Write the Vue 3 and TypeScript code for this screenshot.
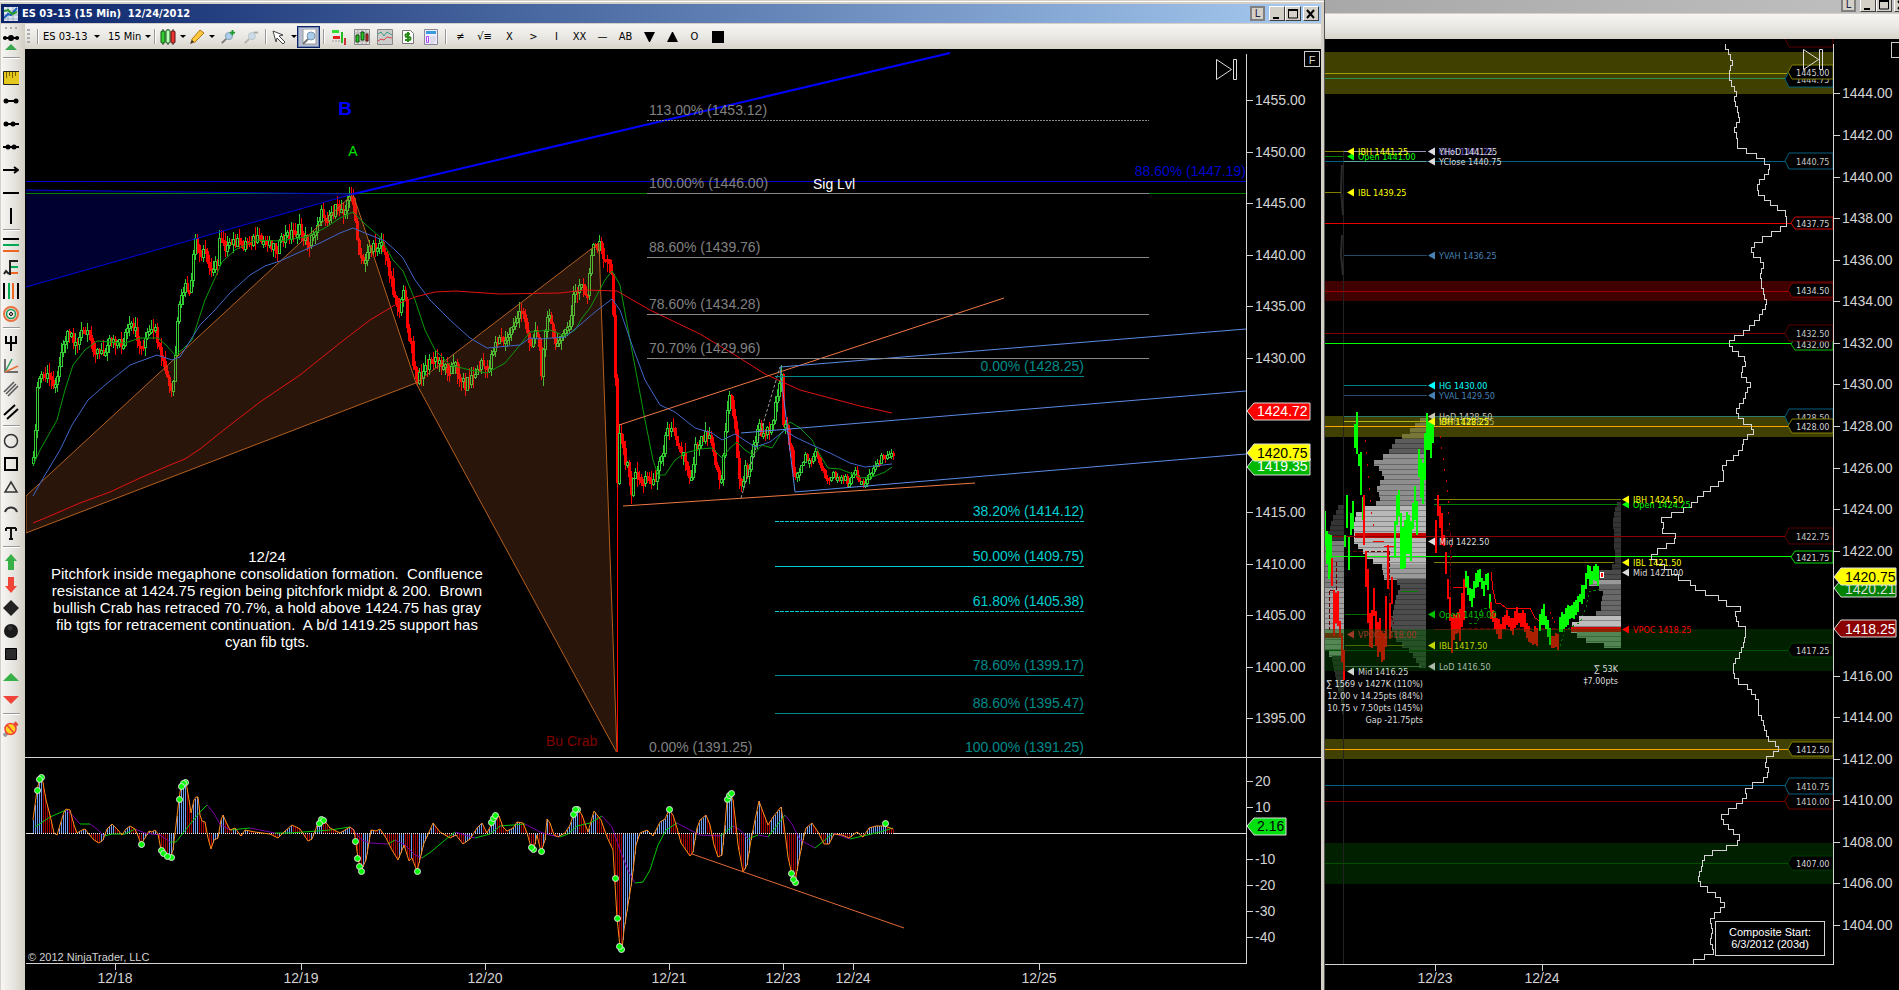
<script setup lang="ts">
type Pt = [number, number]

/* ---------- helpers ---------- */
const parse = (s: string): Pt[] =>
  s.trim().split(/\s+/).map((p) => p.split(',').map(Number) as Pt)

const at = (k: Pt[], x: number): number => {
  for (let i = 1; i < k.length; i++) {
    if (x <= k[i][0]) {
      const [x0, y0] = k[i - 1]
      const [x1, y1] = k[i]
      return x1 === x0 ? y1 : y0 + ((y1 - y0) * (x - x0)) / (x1 - x0)
    }
  }
  return k[k.length - 1][1]
}
const noise = (i: number): number => {
  const v = Math.sin(i * 12.9898) * 43758.5453
  return v - Math.floor(v)
}

/* ---------- price series, 15 minute bars ---------- */
const price = parse(`33,463 34,445 36,405 38,380 40,375 44,376 48,378 52,380 57,380 60,350 63,345 66,332 70,333 73,340 77,342 82,332 86,335 90,340 95,350 100,355
103,352 107,340 112,337 118,342 122,345 127,328 131,328 136,333 140,350 144,340 148,334 156,332 160,360 165,370 168,385 172,396 174,370 177,325 179,310 182,293
186,285 190,300 192,270 194,233 197,250 201,262 204,245 208,270 212,265 217,265 219,235 223,238 226,250 230,246 234,240 240,246 245,243 250,239 256,240 262,242
268,240 276,249 282,240 288,234 294,231 300,230 304,238 308,242 312,238 316,225 320,214 325,216 331,212 338,208 344,210 346,200 350,198 353,200 355,220 357,245
360,260 364,262 368,245 372,250 376,245 380,238 384,255 388,265 392,285 396,303 400,310 404,290 405,295 408,340 411,345 413,365 417,382 421,372 427,365 433,360
440,362 447,368 455,365 460,378 465,384 470,378 477,372 481,360 486,374 490,360 494,342 500,338 505,343 510,330 515,320 521,313 526,320 530,350 534,330 537,335
541,370 544,330 548,315 552,330 555,350 560,330 565,335 570,322 573,295 577,292 582,282 586,300 590,265 593,245 596,255 599,244 603,255 608,263 612,280 615,378
617,478 619,430 623,450 627,468 631,490 636,470 641,482 648,478 655,480 660,458 665,440 670,422 674,425 678,448 684,455 690,480 695,445 700,440 707,430 712,440
716,470 721,480 725,430 730,390 735,430 739,480 742,492 745,460 748,480 752,450 758,425 763,437 768,430 773,415 778,385 781,376 783,420 787,430 791,450 795,483
800,472 804,455 810,460 815,453 820,468 826,478 832,475 840,477 848,482 855,472 862,485 868,475 875,467 880,460 885,455 889,450 893,451`)

const bars = (() => {
  let up = ''
  let down = ''
  let downWick = ''
  let prev = price[0][1]
  for (let i = 0, x = 33; x <= 893; x += 2, i++) {
    const calm = x > 800
    const y = Math.round(at(price, x) + (noise(i) - 0.5) * (calm ? 8 : 12))
    const t = Math.min(prev, y)
    const b = Math.max(prev, y, t + 3)
    const reach = calm ? 5 : 10
    const wt = Math.round(t - noise(i + 500) * reach)
    const wb = Math.round(b + noise(i + 900) * reach)
    if (y < prev) up += `M${x + 0.5} ${wt}V${t}M${x + 0.5} ${b}V${wb}M${x - 0.5} ${t}.5h2V${b}.5h-2Z`
    else {
      down += `M${x - 1} ${t}h3V${b}h-3Z`
      downWick += `M${x + 0.5} ${wt}V${wb}`
    }
    prev = y
  }
  return { up, down, downWick }
})()

const averages = [
  { c: '#0a9a0a', p: '33,466 40,450 57,420 65,390 73,365 85,350 97,341 125,343 140,338 158,338 166,345 175,355 182,350 192,340 205,300 215,278 222,262 235,250 255,240 280,241 306,237 325,228 340,218 353,212 365,224 380,237 393,260 403,271 415,300 425,330 435,350 450,365 470,370 487,373 505,363 520,345 530,332 550,330 565,336 575,330 582,318 590,308 605,280 612,271 620,285 630,340 645,420 653,460 658,475 665,475 675,460 685,453 700,449 712,448 722,458 730,448 737,442 745,450 753,455 762,445 772,448 780,435 790,422 800,428 812,440 820,455 828,468 840,469 850,473 862,478 875,476 885,472 892,467' },
  { c: '#3f66c8', p: '33,496 42,480 60,450 72,425 88,400 105,385 130,365 157,355 172,360 180,357 200,325 215,310 230,293 250,275 265,266 280,261 300,252 320,243 340,233 353,228 365,233 385,241 395,250 403,258 415,280 430,300 450,320 470,338 487,348 520,345 530,338 540,339 565,337 580,325 595,312 612,299 620,310 632,345 645,380 660,405 675,412 695,428 712,433 722,440 735,434 755,447 770,442 785,430 795,437 812,445 830,453 850,463 865,467 892,464' },
  { c: '#e01212', p: '33,523 50,516 80,503 110,492 140,478 170,465 185,459 200,449 225,429 260,402 300,375 340,343 370,320 395,305 415,297 435,292 455,291 500,294 560,293 585,290 617,291 650,310 700,334 735,355 765,374 800,390 830,398 860,406 892,413' },
]

const grayFibs = [
  { t: '113.00% (1453.12)', y: 120, dash: '2 1' },
  { t: '100.00% (1446.00)', y: 193 },
  { t: '88.60% (1439.76)', y: 257 },
  { t: '78.60% (1434.28)', y: 314 },
  { t: '70.70% (1429.96)', y: 358 },
]
const cyanFibs = [
  { t: '0.00% (1428.25)', y: 376, c: '#008b8b' },
  { t: '38.20% (1414.12)', y: 521, c: '#00ced1', dash: '4 1' },
  { t: '50.00% (1409.75)', y: 566, c: '#00ced1' },
  { t: '61.80% (1405.38)', y: 611, c: '#00ced1', dash: '4 1' },
  { t: '78.60% (1399.17)', y: 675, c: '#008b8b' },
  { t: '88.60% (1395.47)', y: 713, c: '#008b8b' },
]
const note = [
  '12/24',
  'Pitchfork inside megaphone consolidation formation.  Confluence',
  'resistance at 1424.75 region being pitchfork midpt & 200.  Brown',
  'bullish Crab has retraced 70.7%, a hold above 1424.75 has gray',
  'fib tgts for retracement continuation.  A b/d 1419.25 support has',
  'cyan fib tgts.',
]
const priceTicks = Array.from({ length: 13 }, (_, i) => 1455 - i * 5)
  .filter((p) => p !== 1425 && p !== 1420)
  .map((p) => ({ t: p.toFixed(2), y: Math.round(100 + (1455 - p) * 10.3) }))
const oscTicks = [20, 10, -10, -20, -30, -40].map((v) => ({ t: String(v), y: Math.round(833 - v * 2.6) }))
const dates = [
  ['12/18', 115], ['12/19', 301], ['12/20', 485], ['12/21', 669], ['12/23', 783], ['12/24', 853], ['12/25', 1039],
] as [string, number][]
const sideDates = [['12/23', 1435], ['12/24', 1542]] as [string, number][]

/* ---------- oscillator ---------- */
const osc = parse(`33,820 37,790 40,778 42,777 46,800 50,815 54,833 57,835 60,825 64,812 66,809 70,810 74,825 77,833 82,830 85,829 88,833 94,840 99,843 103,840 107,829 112,824
118,830 122,835 126,829 130,826 135,829 138,836 141,844 145,838 149,831 152,832 155,830 158,834 161,850 164,854 167,856 171,856 173,850 176,825 179,799 181,786 184,782 186,782
189,800 191,813 194,800 196,797 198,797 200,815 202,821 205,822 208,838 211,849 214,840 218,838 221,820 223,815 226,822 230,830 235,828 241,836 245,830 255,832 270,834 278,838
285,831 292,825 300,829 308,841 312,839 318,823 321,819 324,820 330,828 340,833 350,827 354,830 358,858 361,871 366,860 371,830 376,831 380,829 386,838 392,850 398,860 404,845
409,861 412,858 417,871 421,855 424,843 430,830 433,823 440,832 450,838 456,835 463,844 470,839 477,828 482,823 487,833 491,825 495,815 499,816 503,827 507,831 513,828 517,822
523,823 527,833 531,847 534,848 537,835 541,852 545,840 547,819 550,823 554,835 558,837 565,833 570,825 575,810 578,809 582,815 588,832 594,811 601,820 607,837 613,850 617,918
620,947 622,949 624,930 628,905 632,880 636,845 640,833 647,830 653,836 660,822 665,819 669,810 673,815 677,828 681,843 690,856 693,852 697,828 700,820 706,815 710,825 714,845
718,857 722,855 725,825 727,800 730,794 733,800 736,825 738,845 743,872 747,865 751,840 755,820 759,801 763,812 768,825 773,817 781,807 784,825 788,857 792,875 795,882 798,865
803,840 806,828 812,823 818,832 824,844 829,844 834,834 842,835 849,838 857,832 863,837 869,828 876,826 885,826 893,829`)
const oscLine = 'M' + osc.map((p) => p.join(' ')).join('L')
const oscBars = (() => {
  let rise = ''
  let fall = ''
  for (let x = 33; x <= 893; x += 2) {
    const y = Math.round(at(osc, x))
    const seg = `M${x}.5 833V${y}`
    if (y <= at(osc, x - 2)) rise += seg
    else fall += seg
  }
  return { rise, fall }
})()
const signal = parse(`35,827 50,817 66,810 72,815 80,824 90,824 97,829 104,836 112,834 125,834 135,829 145,833 160,835 170,842 176,842 187,828 200,812 207,805 213,812 220,824 230,830
250,828 275,833 290,833 330,830 350,827 362,840 370,843 388,844 395,840 405,845 415,855 422,858 432,851 445,840 455,832 462,834 475,838 490,834 500,826 525,824 540,832 550,835 560,837
568,834 577,826 590,823 602,816 612,827 620,850 628,870 635,883 643,882 650,870 658,845 666,830 677,823 690,830 700,835 720,836 733,826 740,830 748,839 758,835 768,837 775,828 785,815
792,824 800,840 815,848 825,840 833,833 850,839 880,832 893,828`)
const signalSegs = signal.slice(1).map((p, i) => ({
  d: `M${signal[i].join(' ')}L${p.join(' ')}`,
  c: p[1] <= signal[i][1] ? '#00c800' : '#7a00a8',
}))
const dots = parse(`37,790 41,777 39,779 141,844 161,850 163,853 171,857 167,856 179,799 185,782 183,783 181,786 321,819 323,820 319,823 355,841 357,858 359,866 361,871 417,871 491,822
493,818 495,815 533,849 531,847 541,851 573,814 577,809 575,809 615,878 617,918 621,949 619,946 669,809 727,799 729,795 731,793 791,873 795,882 793,879 885,823`)

/* ---------- right chart ---------- */
const rTicks = Array.from({ length: 21 }, (_, i) => 1444 - i * 2)
  .filter((p) => p !== 1420 && p !== 1418)
  .map((p) => ({ t: p.toFixed(2), y: Math.round(135 + (1442 - p) * 20.79) }))

const bands = [
  { y: 52, h: 42, c: '#404000' },
  { y: 281, h: 20, c: '#400000' },
  { y: 416, h: 21, c: '#404000' },
  { y: 739, h: 20, c: '#404000' },
  { y: 843, h: 41, c: '#002000' },
]
const lines = [
  { y: 73, a: 1325, b: 1788, c: '#a0a000' },
  { y: 78, a: 1325, b: 1786, c: '#2e8b57' },
  { y: 151, a: 1325, b: 1344, c: '#808000' },
  { y: 151, a: 1344, b: 1426, c: '#9a93b8' },
  { y: 156, a: 1325, b: 1343, c: '#008000' },
  { y: 161, a: 1325, b: 1785, c: '#006080' },
  { y: 161, a: 1344, b: 1426, c: '#5fa0a8' },
  { y: 192, a: 1325, b: 1341, c: '#808000' },
  { y: 223, a: 1325, b: 1791, c: '#e80000' },
  { y: 255, a: 1344, b: 1427, c: '#274a6b' },
  { y: 291, a: 1325, b: 1788, c: '#a00000' },
  { y: 333, a: 1325, b: 1786, c: '#800000' },
  { y: 343, a: 1325, b: 1791, c: '#00ff00' },
  { y: 385, a: 1344, b: 1427, c: '#008080' },
  { y: 395, a: 1344, b: 1427, c: '#274a6b' },
  { y: 416, a: 1344, b: 1785, c: '#2e7b6b' },
  { y: 421, a: 1344, b: 1427, c: '#b0b020' },
  { y: 426, a: 1325, b: 1788, c: '#ffa500' },
  { y: 536, a: 1325, b: 1785, c: '#8b0000' },
  { y: 556, a: 1325, b: 1791, c: '#00ff00' },
  { y: 499, a: 1434, b: 1621, c: '#808000' },
  { y: 504, a: 1434, b: 1618, c: '#008000' },
  { y: 562, a: 1434, b: 1614, c: '#808000' },
  { y: 614, a: 1345, b: 1371, c: '#007000' },
  { y: 629, a: 1434, b: 1571, c: '#700000' },
  { y: 645, a: 1345, b: 1404, c: '#707000' },
  { y: 666, a: 1345, b: 1421, c: '#5c735c' },
  { y: 650, a: 1325, b: 1788, c: '#004d00' },
  { y: 749, a: 1325, b: 1789, c: '#ffa500' },
  { y: 785, a: 1325, b: 1785, c: '#006080' },
  { y: 801, a: 1325, b: 1785, c: '#800000' },
  { y: 863, a: 1325, b: 1789, c: '#005000' },
]
type Kind = 'l' | 'm' | 's'
const dims: Record<Kind, { x: number; h: number }> = { l: { x: 1785, h: 8 }, m: { x: 1788, h: 7 }, s: { x: 1791, h: 6 } }
const levels = ([
  ['1444.75', 79, 'l', '#006080'], ['1445.00', 72, 'm', '#808000'],
  ['1440.75', 161, 'l', '#006080'], ['1437.75', 223, 's', '#d00000'],
  ['1434.50', 290, 'm', '#800000'], ['1432.00', 344, 's', '#00c000'],
  ['1432.50', 333, 'l', '#580000'], ['1428.50', 417, 'l', '#006080'],
  ['1428.00', 426, 'm', '#808000'], ['1422.75', 536, 'l', '#580000'],
  ['1421.75', 557, 's', '#00e000'], ['1417.25', 650, 'm', '#004000'],
  ['1412.50', 749, 'm', '#808000'], ['1410.00', 801, 'l', '#700000'],
  ['1410.75', 786, 'l', '#006080'], ['1407.00', 863, 'm', '#003800'],
] as [string, number, Kind, string][]).map(([t, y, k, c]) => {
  const { x, h } = dims[k]
  return { t, y, k, c, d: `M${x} ${y}L${x + 4} ${y - h}H1833V${y + h}H${x + 4}Z` }
})
const marks = [
  [1347, 156, 'Open 1441.00', '#00ff00'], [1347, 151, 'IBH 1441.25', '#ffff00'], [1347, 192, 'IBL 1439.25', '#ffff00'],
  [1428, 151, 'OHH 1441.25', '#6a5acd'], [1428, 151, 'YHoD 1441.25', '#dcdcdc'], [1428, 161, 'YClose 1440.75', '#dcdcdc'],
  [1428, 255, 'YVAH 1436.25', '#4682b4'], [1428, 385, 'HG 1430.00', '#00ffff'], [1428, 395, 'YVAL 1429.50', '#4682b4'],
  [1428, 416, 'HoD 1428.50', '#c8c8b8'], [1428, 421, 'YMid 1428.25', '#b0b060'], [1428, 421, 'IBH 1428.25', '#ffff00'],
  [1428, 541, 'Mid 1422.50', '#dcdcdc'], [1428, 614, 'Open 1419.00', '#00c000'], [1428, 645, 'IBL 1417.50', '#c0d800'],
  [1428, 666, 'LoD 1416.50', '#a8b8a8'], [1347, 634, 'VPOC 1418.00', '#a03a28'], [1347, 671, 'Mid 1416.25', '#d0d8d0'],
  [1622, 504, 'Open 1424.25', '#00ff00'], [1622, 499, 'IBH 1424.50', '#ffff00'], [1622, 562, 'IBL 1421.50', '#ffff00'],
  [1622, 572, 'Mid 1421.00', '#dcdcdc'], [1622, 629, 'VPOC 1418.25', '#ff0000'],
].map(([x, y, t, c]) => ({ x: x as number, y: y as number, t: t as string, c: c as string }))

/* vertical profile: key points are [y, left edge] */
const rows = (edge: Pt[], right: number, shade: (y: number) => string) => {
  const out: { x: number; y: number; w: number; c: string }[] = []
  for (let i = 0, y = edge[0][0]; y < edge[edge.length - 1][0]; i++, y = Math.round(edge[0][0] + i * 5.2)) {
    const x = Math.round(at(edge, y + 2))
    out.push({ x, y, w: right - x, c: shade(y) })
  }
  return out
}
const profiles = [
  ...rows(parse('418,1422 428,1412 432,1407 440,1396 450,1390 455,1384 460,1377 463,1373 466,1378 472,1382 480,1385 484,1375 490,1378 498,1380 505,1375 508,1365 515,1355 530,1354 538,1353 545,1358 552,1365 558,1368 562,1377 565,1382 578,1384 582,1401 600,1395 612,1393 620,1390 628,1392 640,1397 650,1410 660,1417 668,1421'), 1426,
    (y) => (y < 437 ? '#77773a' : y < 450 ? '#5c5c5c' : y < 505 ? '#8e8e8e' : y < 560 ? '#b8b8b8' : y < 578 ? '#9a9a9a' : y < 628 ? '#4d4d4d' : '#3a4a3a')),
  ...rows(parse('505,1339 520,1332 530,1330 535,1325 650,1325 655,1331 665,1334 680,1336 700,1341 710,1342'), 1344,
    (y) => (y < 538 ? '#333' : y < 585 ? '#7d7d7d' : y < 628 ? '#a2a2a2' : y < 652 ? '#7f9a7f' : '#273227')),
  ...rows(parse('502,1618 510,1615 518,1613 540,1614 560,1615 567,1612 570,1600 577,1598 580,1588 584,1590 588,1602 595,1604 600,1601 612,1601 616,1582 622,1572 631,1571 635,1579 640,1588 645,1608 648,1608'), 1621,
    (y) => (y < 568 ? '#333' : y < 578 ? '#4a4a4a' : y < 584 ? '#999' : y < 614 ? '#686868' : y < 630 ? '#bdbdbd' : '#7d967d')),
]
const vpocs = [
  { x: 1355, y: 533, w: 71, h: 5, c: '#c80000' },
  { x: 1325, y: 633, w: 18, h: 5, c: '#8e2410' },
  { x: 1571, y: 627, w: 50, h: 5, c: '#cc0800' },
]
const runs = [
  ['#0f0', '1325,540 1329,550 1332,560'],
  ['#f00', '1332,570 1333,620 1337,600 1341,640 1344,660'],
  ['#0f0', '1345,640 1345,540 1347,510 1349,560 1351,520 1352,550 1354,470 1355,430 1357,440 1360,470 1363,510'],
  ['#f00', '1364,520 1366,580 1369,600 1371,660 1374,600 1376,620 1378,650 1381,645 1383,655 1386,620 1388,575 1390,610 1393,590'],
  ['#0f0', '1395,545 1397,520 1399,500 1401,540 1404,555 1408,530 1412,540 1414,500 1417,520 1418,450 1420,480 1422,500 1425,460 1426,425 1430,440 1434,425'],
  ['#f00', '1436,540 1437,510 1439,505 1443,530 1446,560 1449,600 1452,635 1455,620 1460,625 1464,600'],
  ['#0f0', '1466,580 1469,590 1472,600 1475,580 1480,575 1484,590 1487,575 1490,600'],
  ['#f00', '1491,612 1495,622 1500,630 1507,618 1512,625 1518,617 1524,621 1527,630 1532,637 1538,635'],
  ['#0f0', '1540,622 1544,615 1548,630 1550,635'],
  ['#f00', '1552,643 1558,640'],
  ['#0f0', '1560,625 1566,617 1572,612 1578,602 1584,590 1588,572 1592,580 1596,572 1599,576'],
].map(([c, s], n) => {
  const k = parse(s)
  const wild = k[0][0] < 1436 ? 26 : k[0][0] < 1466 ? 16 : 7
  const base = wild > 10 ? 5 : 4
  let d = ''
  for (let x = k[0][0], i = 0; x <= k[k.length - 1][0]; x += 2, i++) {
    const y = Math.round(at(k, x))
    const r = (salt: number) => Math.round(noise(i * 7 + n * 31 + salt) * wild)
    d += `M${x} ${y - base - r(1)}V${y + base + r(2)}`
  }
  return { c, d }
})
const trails = [
  { c: '#d00000', d: '1440,436 1442,449 1446,480 1448,500 1450,527 1452,560', dash: '2 9' },
  { c: '#ff0000', d: '1453,587 1467,587', dash: '' },
  { c: '#ff0000', d: '1491,572 1493,590 1496,603 1501,604 1506,608 1530,608 1535,618 1540,621', dash: '' },
  { c: '#d00000', d: '1365,440 1368,470 1371,510 1374,530', dash: '2 10' },
  { c: '#d00000', d: '1550,612 1553,620 1557,625', dash: '2 3' },
  { c: '#008000', d: '1560,646 1565,630 1572,627 1580,622 1586,608 1589,592 1600,589', dash: '2 3' },
  { c: '#008000', d: '1469,623 1477,623 1482,609 1491,608', dash: '3 2' },
  { c: '#008000', d: '1401,591 1418,591', dash: '' },
  { c: '#600000', d: '1434,530 1450,530 1450,628 1560,628', dash: '4 2' },
  { c: '#600000', d: '1347,551 1389,551 1389,610 1394,624', dash: '4 2' },
  { c: '#600000', d: '1336,562 1336,590 1329,590 1329,630', dash: '4 2' },
  { c: '#ff0000', d: '1373,541 1384,541', dash: '' },
  { c: '#ff0000', d: '1384,546 1395,546', dash: '' },
]
const stats = [
  { x: 1423, y: 687, t: '∑ 1569 v 1427K (110%)' },
  { x: 1423, y: 699, t: '‡ 12.00 v 14.25pts (84%)' },
  { x: 1423, y: 711, t: 'B 10.75 v 7.50pts (145%)' },
  { x: 1423, y: 723, t: 'Gap -21.75pts' },
  { x: 1618, y: 672, t: '∑ 53K' },
  { x: 1618, y: 684, t: '‡7.00pts' },
]
const composite = (() => {
  const k = parse(`44,1725 52,1728 60,1732 68,1730 76,1728 84,1732 92,1736 100,1733 110,1738 120,1739 128,1733 135,1737 147,1737 150,1746 155,1756 161,1766 165,1769 174,1767 180,1759 190,1756 195,1762 202,1770 208,1778 212,1785 224,1786 230,1777
235,1767 242,1756 248,1750 255,1754 262,1764 272,1760 285,1761 295,1764 303,1766 312,1762 322,1754 330,1746 337,1734 343,1728 350,1734 357,1744 366,1746 370,1737 377,1744 384,1750 392,1745 397,1746 403,1740 412,1735
418,1740 424,1750 432,1753 438,1744 447,1742 453,1737 458,1732 463,1725 468,1721 475,1724 481,1721 487,1711 493,1703 500,1695 507,1688 513,1674 518,1660 526,1664 532,1661 536,1680 543,1670 549,1658 556,1651 562,1657
570,1670 577,1679 583,1692 590,1697 595,1716 601,1722 605,1736 609,1741 614,1734 622,1737 628,1745 634,1745 642,1743 650,1741 658,1736 664,1733 674,1733 680,1738 686,1747 692,1752 700,1758 712,1758 720,1762 730,1765
738,1768 745,1778 750,1778 757,1766 765,1765 770,1769 778,1765 783,1753 790,1745 797,1747 802,1739 808,1733 812,1723 818,1720 825,1727 832,1734 838,1741 844,1735 848,1723 852,1712 858,1702 866,1702 875,1698 882,1698
888,1707 896,1717 905,1725 910,1719 918,1709 930,1712 943,1710 950,1714 955,1707 960,1693 964,1693`)
  let d = 'M1725.5 44'
  for (let i = 1; ; i++) {
    const y = Math.round(44 + i * 5.2)
    if (y > 964) break
    d += `V${y}.5H${Math.round(at(k, y + 2))}.5`
  }
  return d
})()

/* ---------- toolbars ---------- */
const magnifier = '<circle cx="10" cy="7" r="4" fill="#a9cdea" stroke="#7d97ad"/><path d="M7 10l-5 5" stroke="#777" stroke-width="2"/>'
const chartButtons = [
  { n: 'Market depth', i: '<path d="M1 2h6M1 12h10" stroke="#999" stroke-dasharray="2 1"/><path d="M1 1h7v3H1z" fill="#3d3"/><path d="M2 7h7v3H2z" fill="#d22"/><path d="M10 3h2v11h-2z" fill="#2b2"/><path d="M13 9h2v7h-2z" fill="#c33"/>' },
  { n: 'Chart panel', i: '<path d="M.5.5h15v15H.5z" fill="#ddd" stroke="#888"/><path d="M1 4h14M1 8h14M1 12h14M4 1v14M8 1v14M12 1v14" stroke="#aaa"/><path d="M2 6h3v7H2zM7 3h3v8H7z" fill="#2c2" stroke="#141"/><path d="M12 5h2v7h-2z" fill="#d33" stroke="#511"/>' },
  { n: 'Indicators', i: '<path d="M.5.5h15v15H.5z" fill="#ccc" stroke="#888"/><path d="M1 5l3-2 3 4 3-4 5 3" fill="none" stroke="#3a9a7a"/><path d="M1 12l3-2 3 1 3-3 5 1" fill="none" stroke="#d44"/>' },
  { n: 'Strategies', i: '<path d="M2.500 1.500h8l3 3v10h-11z" fill="#fff" stroke="#777"/><path d="M10 5H7a1.500 1.500 0 0 0 0 3h2a1.500 1.500 0 0 1 0 3H5M8 3v10" fill="none" stroke="#2a8a1a" stroke-width="2"/>' },
  { n: 'Properties', i: '<path d="M1.500.5h13v15h-13z" fill="#eef" stroke="#889"/><path d="M3 2h10v3H3z" fill="#3a9ae0"/><path d="M3.500 7.500h2v6h-2z" fill="#fff" stroke="#a4f"/><path d="M7 8h6M7 10h6M7 12h6M7 14h4" stroke="#c8c8d8"/>' },
]
const glyphButtons: { t?: string; n?: string; d?: string; wide?: boolean }[] = [
  { t: '≠' }, { t: '√≡', wide: true }, { t: 'X', wide: true }, { t: '>' }, { t: 'I' }, { t: 'XX' }, { t: '—' }, { t: 'AB' },
  { n: 'Triangle down', d: 'M3 3h11l-5 10h-1z' },
  { n: 'Triangle up', d: 'M3 13h11l-5-10h-1z' },
  { t: 'O' },
  { n: 'Square', d: 'M2 2h12v12H2z' },
]
const k = 'stroke="#000" stroke-width="2" fill="none"'
const dot = (x: number) => `<circle cx="${x}" cy="8" r="2.500"/>`
const rail: { n: string; i?: string }[] = [
  { n: 'Ruler', i: '<path d="M.5 1.500h16v13H.5z" fill="#e4c81e" stroke="#222"/><path d="M3.500 2v6M6.500 2v4M9.500 2v6M12.500 2v4" stroke="#776200"/>' },
  { n: 'Line', i: `<path d="M2 8h12" ${k}/>${dot(3)}${dot(13)}` },
  { n: 'Ray', i: `<path d="M1 8h15" ${k}/>${dot(3)}${dot(10)}` },
  { n: 'Extended line', i: `<path d="M0 8h16" ${k}/>${dot(5)}${dot(11)}` },
  { n: 'Arrow line', i: `<path d="M0 8h14M11 5l4 3-4 3" ${k}/>` },
  { n: 'Horizontal line', i: `<path d="M0 8h16" ${k}/>` },
  { n: 'Vertical line', i: `<path d="M8 0v16" ${k}/>` },
  { n: '' },
  { n: 'Fibonacci retracements', i: '<path d="M0 2h16" stroke="#000" stroke-width="2"/><path d="M0 8h16" stroke="#0a5" stroke-width="2"/><path d="M0 14h16" stroke="#e62" stroke-width="2"/>' },
  { n: 'Fibonacci extensions', i: '<path d="M15 1H7v14M1 14l2-3 3 3" stroke="#222" stroke-width="2" fill="none"/><path d="M8 7h7" stroke="#0a5" stroke-width="2"/><path d="M8 13h7" stroke="#e62" stroke-width="2"/>' },
  { n: 'Fibonacci time', i: '<path d="M1 0v16M15 0v16" stroke="#000" stroke-width="2"/><path d="M6 0v16" stroke="#0a5" stroke-width="2"/><path d="M10 0v16" stroke="#e62" stroke-width="2"/>' },
  { n: 'Fibonacci circle', i: '<circle cx="8" cy="8" r="7" fill="none" stroke="#e87040" stroke-width="2"/><circle cx="8" cy="8" r="4.500" fill="none" stroke="#1a9a5a" stroke-width="1.500"/><circle cx="8" cy="8" r="1.500" fill="none" stroke="#000"/>' },
  { n: '' },
  { n: 'Pitchfork', i: `<path d="M3 1v7h10V1M8 1v15" ${k}/>` },
  { n: 'Gann fan', i: '<path d="M2 1v13h13" fill="none" stroke="#444" stroke-width="1.500"/><path d="M2 14L9 1" stroke="#2a9a5a" stroke-width="1.500"/><path d="M2 14L15 8" stroke="#e87040" stroke-width="1.500"/>' },
  { n: 'Regression channel', i: '<path d="M1 11L11 1M3 13L13 3M5 15L15 5" stroke="#555" stroke-width="1.500"/>' },
  { n: 'Trend channel', i: '<path d="M1 11L12 1M4 15L15 5" stroke="#000" stroke-width="2"/>' },
  { n: '' },
  { n: 'Ellipse', i: '<circle cx="8" cy="8" r="6.500" fill="none" stroke="#333" stroke-width="1.500"/>' },
  { n: 'Rectangle', i: `<path d="M2 2h12v12H2z" ${k}/>` },
  { n: 'Triangle', i: '<path d="M8 3l6 10H2z" fill="none" stroke="#333" stroke-width="1.500"/>' },
  { n: 'Arc', i: '<path d="M2 10c2-6 10-6 12 0" fill="none" stroke="#333" stroke-width="2"/>' },
  { n: 'Text', i: '<path d="M3 3h10M8 3v11M6 14h4M3 3v3M13 3v3" fill="none" stroke="#111" stroke-width="2"/>' },
  { n: '' },
  { n: 'Arrow up', i: '<path d="M8 0l6 7h-3v9H5V7H2z" fill="#38b048"/>' },
  { n: 'Arrow down', i: '<path d="M8 16l6-7h-3V0H5v9H2z" fill="#f04438"/>' },
  { n: 'Diamond', i: '<path d="M8 0l8 8-8 8-8-8z" fill="#222"/>' },
  { n: 'Dot', i: '<circle cx="8" cy="8" r="7" fill="#1a1a1a"/><circle cx="7" cy="5" r="2.500" fill="#333"/>' },
  { n: 'Square', i: '<path d="M2.500 2.500h11v11h-11z" fill="#2a2a2a" stroke="#000"/>' },
  { n: 'Triangle up', i: '<path d="M8 4l8 8H0z" fill="#38b048"/>' },
  { n: 'Triangle down', i: '<path d="M8 12l8-8H0z" fill="#f04438"/>' },
  { n: '' },
  { n: 'Remove drawings', i: '<path d="M1 15L14 2" stroke="#999" stroke-width="4"/><path d="M12 4l2-2" stroke="#f04438" stroke-width="4"/><circle cx="7.500" cy="8" r="5.500" fill="#ffd21e" stroke="#f04438" stroke-width="1.500"/><path d="M4 4l7 8" stroke="#f04438" stroke-width="1.500"/>' },
]
</script>

<template>
  <main class="desktop">
    <section class="window active">
      <header class="titlebar">
        <svg class="appicon" viewBox="0 0 14 14"><rect width="14" height="14" fill="#dfe6f2" /><path d="M0 4h14M0 8h14M0 12h14M4 0v14M9 0v14" stroke="#9ab" /><path d="M0 11l4-4 3 1 6-7" fill="none" stroke="#1a60c0" stroke-width="2" /><path d="M0 4l4-1 4 4 5-2" fill="none" stroke="#2a9a2a" stroke-width="2" /></svg>
        <h1>ES 03-13 (15 Min)&nbsp; 12/24/2012</h1>
        <div class="winbuttons">
          <button class="link" aria-label="Link">L</button>
          <button aria-label="Minimize"><svg viewBox="0 0 14 12"><path d="M3 9h6v2H3z" /></svg></button>
          <button aria-label="Maximize"><svg viewBox="0 0 14 12"><path d="M2.500 2h9v8h-9z" fill="none" stroke="#000" /><path d="M2 1h10v2H2z" /></svg></button>
          <button class="close" aria-label="Close"><svg viewBox="0 0 14 12"><path d="M3 2l7 8M10 2l-7 8" stroke="#000" stroke-width="2" /></svg></button>
        </div>
      </header>
      <div class="body">
        <nav class="rail" aria-label="Drawing tools">
          <button class="snap" aria-label="Snap mode"><svg viewBox="0 0 16 24"><path d="M2 1h2M7 1h2M12 1h2" stroke="#aaa" stroke-width="2" /><path d="M0 11h16" stroke="#000" stroke-width="2" /><circle cx="2" cy="11" r="2" /><circle cx="8" cy="11" r="3" /><circle cx="14" cy="11" r="2" /><path d="M8 17l6 6H2z" fill="#3aa850" /></svg></button>
          <hr class="first">
          <template v-for="(r, n) in rail" :key="n">
            <button v-if="r.i" :aria-label="r.n"><svg viewBox="0 0 16 16" v-html="r.i"></svg></button>
            <hr v-else>
          </template>
        </nav>
        <div class="main">
          <div class="toolbar">
            <span class="grip"></span><i class="sep"></i>
            <label class="pick sym"><select aria-label="Instrument"><option>ES 03-13</option></select></label>
            <label class="pick per"><select aria-label="Interval"><option>15 Min</option></select></label>
            <i class="sep"></i>
            <button class="split" aria-label="Chart style"><svg viewBox="0 0 16 16"><path d="M3 0v16M8 0v16M13 0v16" stroke="#333" /><rect x="1" y="2" width="4" height="12" rx="1" fill="#3c3" stroke="#151" /><rect x="6" y="1" width="4" height="13" rx="1" fill="#bfb" stroke="#151" /><rect x="11" y="2" width="4" height="12" rx="1" fill="#e33" stroke="#511" /></svg></button>
            <button class="split" aria-label="Draw"><svg viewBox="0 0 16 16"><path d="M2 14l1-4 8-9 4 3-9 9z" fill="#ffc83c" stroke="#b07818" /><path d="M1 15l2-4 2 2z" fill="#333" /></svg></button>
            <button class="tool" aria-label="Zoom in"><svg viewBox="0 0 18 16"><g v-html="magnifier"></g><path d="M14 0v6M11 3h6" stroke="#1a9a2a" stroke-width="2" /></svg></button>
            <button class="tool faded" aria-label="Zoom out"><svg viewBox="0 0 18 16"><g v-html="magnifier"></g><path d="M12 3h5" stroke="#555" stroke-width="2" /></svg></button>
            <i class="sep"></i>
            <button class="split cursor" aria-label="Cursor"><svg viewBox="0 0 16 16"><path d="M2 2l10 4-4 1 6 6-2 2-6-6-1 4z" fill="#fff" stroke="#444" /></svg></button>
            <button class="tool on" aria-label="Zoom window"><svg viewBox="0 0 16 16"><path d="M2 0h13v15H2z" fill="#fff" stroke="#999" /><g v-html="magnifier"></g></svg></button>
            <i class="sep"></i>
            <button v-for="b in chartButtons" :key="b.n" class="tool" :aria-label="b.n"><svg viewBox="0 0 16 16" v-html="b.i"></svg></button>
            <i class="sep"></i>
            <button v-for="(g, n) in glyphButtons" :key="n" class="glyph" :class="{ wide: g.wide }" :aria-label="g.n">
              <svg v-if="g.d" viewBox="0 0 16 16"><path :d="g.d" /></svg>
              <template v-else>{{ g.t }}</template>
            </button>
          </div>

          <svg class="chart" viewBox="25 49 1296 941" role="img" aria-label="ES 03-13 price chart">
            <defs><clipPath id="upper"><path d="M26 49H1247V752H26Z" /></clipPath></defs>
            <g clip-path="url(#upper)">
              <path d="M26 190L353 194L26 287Z" fill="#000030" />
              <path class="crisp" d="M26 181.500H1246" stroke="#0000d0" />
              <path class="crisp" d="M26 193.500H1246" stroke="#008000" />
              <path :d="bars.downWick" stroke="#f00" class="crisp" />
              <path :d="bars.down" fill="#f00" class="crisp" />
              <path :d="bars.up" fill="#000" stroke="#32cd32" class="crisp" />
              <path d="M26 496L353 194L416 383L26 533ZM416 383L599 243L617 753Z" fill="#c8642d" fill-opacity=".21" stroke="#b4601f" />
              <path d="M26 287L353 194M26 190L353 194" stroke="#0000e0" />
              <path d="M353 194L950 53" stroke="#0000ff" stroke-width="2" />
              <polyline v-for="a in averages" :key="a.c" :points="a.p" :stroke="a.c" fill="none" />
              <path class="crisp" d="M617.500 420V752" stroke="#f00" />
              <path d="M619 425L1004 298M623 506L975 483" stroke="#f07845" />
              <path d="M741 498L780 367" stroke="#999" stroke-dasharray="3 2" />
              <path d="M1246 329L780 367L795 492L1246 454M741 433L1246 391" fill="none" stroke="#5b8ae6" />
            </g>
            <g v-for="f in grayFibs" :key="f.t">
              <text x="649" :y="f.y - 5" fill="#808080">{{ f.t }}</text>
              <path class="crisp" :d="`M647 ${f.y + 0.5}H1149`" stroke="#888" :stroke-dasharray="f.dash" />
            </g>
            <text x="649" y="752" fill="#808080">0.00% (1391.25)</text>
            <g v-for="f in cyanFibs" :key="f.t">
              <text x="1084" :y="f.y - 5" :fill="f.c" class="end">{{ f.t }}</text>
              <path class="crisp" :d="`M775 ${f.y + 0.5}H1084`" :stroke="f.c" :stroke-dasharray="f.dash" />
            </g>
            <text x="1084" y="752" fill="#008b8b" class="end">100.00% (1391.25)</text>
            <text x="1246" y="176" fill="#0000cd" class="end">88.60% (1447.19)</text>
            <text x="813" y="189" fill="#fff">Sig Lvl</text>
            <text x="546" y="746" fill="#800000">Bu Crab</text>
            <text x="345" y="115" class="mid big" fill="#0000ff">B</text>
            <text x="353" y="156" class="mid" fill="#00e000">A</text>
            <text v-for="(l, n) in note" :key="n" x="267" :y="562 + n * 17" class="mid note" fill="#fff">{{ l }}</text>
            <path d="M1216.500 59.500V79.500L1231.500 69.500ZM1233.500 59.500h3v20h-3Z" fill="none" stroke="#ddd" />
            <rect x="1304.500" y="51.500" width="15" height="15" fill="#000" stroke="#ccc" />
            <text x="1312" y="64" class="mid small">F</text>

            <path :d="oscBars.fall" stroke="#a00000" class="crisp" />
            <path :d="oscBars.rise" stroke="#6f9cf0" class="crisp" />
            <path d="M33 833.500H893" stroke="#eee" stroke-dasharray="1 1" class="crisp" />
            <path d="M26 833.500H33M893 833.500H1247" stroke="#ddd" class="crisp" />
            <path v-for="(s, n) in signalSegs" :key="n" :d="s.d" :stroke="s.c" />
            <path :d="oscLine" fill="none" stroke="#ff8c1a" />
            <path d="M692 854L904 928" stroke="#e06a38" />
            <circle v-for="(d, n) in dots" :key="n" :cx="d[0] + 0.5" :cy="d[1] + 0.5" r="3" fill="#00ff00" stroke="#e0e0e0" />
            <text x="28" y="961" class="small">© 2012 NinjaTrader, LLC</text>

            <path class="crisp" d="M25 757.500H1321M26 963.500H1247M1246.500 54V964" stroke="#d3d3d3" />
            <g v-for="t in priceTicks.concat(oscTicks)" :key="t.t">
              <path class="crisp" :d="`M1247 ${t.y + 0.5}h6`" stroke="#d3d3d3" />
              <text x="1255" :y="t.y + 5">{{ t.t }}</text>
            </g>
            <g v-for="d in dates" :key="d[0]">
              <path class="crisp" :d="`M${d[1] + 0.5} 964v6`" stroke="#d3d3d3" />
              <text :x="d[1]" y="983" class="mid">{{ d[0] }}</text>
            </g>
            <g stroke="#ddd">
              <path d="M1247 467L1254 458H1310V475H1254Z" fill="#00b800" />
              <path d="M1247 411L1254 403H1310V420H1254Z" fill="#ff0000" />
              <path d="M1247 826L1254 818H1286V835H1254Z" fill="#00e010" />
            </g>
            <text x="1257" y="471" fill="#fff">1419.35</text>
            <path d="M1247 453L1254 444H1310V461H1254Z" fill="#ffff00" stroke="#ddd" />
            <text x="1257" y="416" fill="#fff">1424.72</text>
            <text x="1257" y="458" fill="#000">1420.75</text>
            <text x="1257" y="831" fill="#000">2.16</text>
          </svg>
        </div>
      </div>
    </section>

    <section class="window side">
      <header class="titlebar">
        <div class="winbuttons">
          <button class="link" aria-label="Link">L</button>
          <button aria-label="Minimize"><svg viewBox="0 0 14 12"><path d="M3 9h6v2H3z" /></svg></button>
          <button aria-label="Maximize"><svg viewBox="0 0 14 12"><path d="M2.500 2h9v8h-9z" fill="none" stroke="#000" /><path d="M2 1h10v2H2z" /></svg></button>
          <button class="close" aria-label="Close"><svg viewBox="0 0 14 12"><path d="M3 2l7 8M10 2l-7 8" stroke="#000" stroke-width="2" /></svg></button>
        </div>
      </header>
      <div class="toolbar"></div>
      <svg class="chart" viewBox="1325 39 574 951" role="img" aria-label="Composite profile chart">
        <rect v-for="b in bands" :key="b.y" x="1325" :y="b.y" width="509" :height="b.h" :fill="b.c" />
        <path d="M1343.500 150V540M1343.500 700V964" stroke="#222" class="crisp" />
        <path d="M1342 165L1341 190L1343 215M1342 235L1341 255L1343 275" stroke="#2c2c2c" fill="none" stroke-width="2" />
        <g class="crisp">
          <g v-for="(p, n) in profiles" :key="n">
            <rect :x="p.x" :y="p.y" :width="p.w" height="6" :fill="p.c" />
            <rect :x="p.x" :y="p.y + 4" :width="p.w" height="1" fill="#000" fill-opacity=".28" />
          </g>
          <rect v-for="v in vpocs" :key="v.x" :x="v.x" :y="v.y" :width="v.w" :height="v.h" :fill="v.c" />
          <path v-for="(l, n) in lines" :key="n" :d="`M${l.a} ${l.y + 0.5}H${l.b}`" :stroke="l.c" />
          <polyline v-for="(t, n) in trails" :key="n" :points="t.d" fill="none" :stroke="t.c" :stroke-dasharray="t.dash || undefined" />
          <path v-for="(r, n) in runs" :key="n" :d="r.d" :stroke="r.c" stroke-width="2" />
          <rect x="1600" y="572" width="3" height="5" fill="#f00" stroke="#fff" />
        </g>
        <path d="M1325 629H1834V671H1325Z" fill="#006000" fill-opacity=".33" />
        <path :d="composite" fill="none" stroke="#d3d3d3" class="crisp" />
        <g v-for="(m, n) in marks" :key="n" :fill="m.c">
          <path :d="`M${m.x} ${m.y + 0.5}l7 -4v8Z`" />
          <text :x="m.x + 11" :y="m.y + 4" class="tiny">{{ m.t }}</text>
        </g>
        <text v-for="s in stats" :key="s.t" :x="s.x" :y="s.y" class="tiny end" fill="#dcdcdc">{{ s.t }}</text>
        <path d="M1785 39L1789 47H1833V39" fill="#000" stroke="#580000" />
        <g v-for="l in levels" :key="l.t">
          <path :d="l.d" fill="#000" :stroke="l.c" />
          <text x="1796" :y="l.y + 4" class="level" :class="{ dim: l.k === 'l' }">{{ l.t }}</text>
        </g>
        <path d="M1803.500 49.500V69.500L1818.500 59.500ZM1819.500 49.500h3v20h-3Z" fill="none" stroke="#ddd" />
        <rect x="1891.500" y="42.500" width="15" height="15" fill="#000" stroke="#ccc" />
        <path class="crisp" d="M1325 964.500H1834M1833.500 44V965" stroke="#d3d3d3" />
        <g v-for="t in rTicks" :key="t.t">
          <path class="crisp" :d="`M1834 ${t.y + 0.5}h6`" stroke="#d3d3d3" />
          <text x="1842" :y="t.y + 5">{{ t.t }}</text>
        </g>
        <g v-for="d in sideDates" :key="d[0]">
          <path class="crisp" :d="`M${d[1] + 0.5} 965v6`" stroke="#d3d3d3" />
          <text :x="d[1]" y="983" class="mid">{{ d[0] }}</text>
        </g>
        <g stroke="#ddd">
          <path d="M1834 588L1841 580H1896V597H1841Z" fill="#008000" />
          <path d="M1834 629L1841 620H1896V637H1841Z" fill="#8b0000" />
        </g>
        <text x="1845" y="594" fill="#ddd">1420.21</text>
        <path d="M1834 577L1841 568H1896V585H1841Z" fill="#ffff00" stroke="#ddd" />
        <text x="1845" y="582" fill="#000">1420.75</text>
        <text x="1845" y="634" fill="#fff">1418.25</text>
        <rect x="1715.500" y="921.500" width="109" height="34" fill="#000" stroke="#d3d3d3" />
        <text x="1770" y="936" class="mid small" fill="#fff">Composite Start:</text>
        <text x="1770" y="948" class="mid small" fill="#fff">6/3/2012 (203d)</text>
      </svg>
    </section>
  </main>
</template>

<style>
body { margin: 0; background: #000; }
</style>

<style scoped>
.desktop { display: grid; grid-template-columns: minmax(0, 1325fr) minmax(0, 574fr); height: 100vh; overflow: hidden; background: #000; font-family: "DejaVu Sans Condensed", "DejaVu Sans", sans-serif; font-size: 11px; }
.window { display: flex; flex-direction: column; min-width: 0; min-height: 0; box-sizing: border-box; }
.active { padding: 4px 3px 0 1px; background: #d4d0c8; border-right: 1px solid #555; box-shadow: inset 0 1px #d4d0c8, inset 0 2px #fff; }
.side { overflow: hidden; background: #000; }
.titlebar { display: flex; align-items: center; height: 19px; flex: none; padding: 0 2px 0 3px; background: linear-gradient(90deg, #0a246a, #a6caf0); color: #fff; }
.side .titlebar { height: 13px; align-items: flex-end; background: linear-gradient(90deg, #a8a8a8, #c0c0c0); padding: 0; border-bottom: 1px solid #d4d0c8; }
.appicon { width: 14px; height: 14px; margin-right: 4px; }
h1 { margin: 0; font-size: 11px; line-height: 19px; font-weight: bold; white-space: nowrap; }
.winbuttons { display: flex; margin-left: auto; }
.side .winbuttons { margin-right: -11px; padding-bottom: 1px; }
button { margin: 0; padding: 0; border: 0; background: none; font: inherit; color: #000; }
.winbuttons button { box-sizing: border-box; width: 16px; height: 15px; background: #d4d0c8; border: 1px solid; border-color: #fff #404040 #404040 #fff; display: grid; place-items: center; }
.winbuttons svg { width: 14px; height: 12px; display: block; }
.winbuttons .link { border: 2px solid #808080; margin-right: 4px; width: 15px; line-height: 10px; color: #224; }
.winbuttons .close { margin-left: 2px; }
.body { display: flex; flex: 1; min-height: 0; margin-top: 1px; }
.rail { flex: none; width: 24px; background: linear-gradient(90deg, #f7f6f4, #e4e2dc 60%, #d2cec4); display: flex; flex-direction: column; }
.rail button { flex: none; width: 20px; height: 23px; display: grid; place-items: center; }
.rail svg { width: 16px; height: 16px; }
.rail .snap { height: 30px; }
.rail .snap svg { height: 24px; }
hr { width: 17px; height: 2px; margin: 2px 0 2px 2px; border: 0; background: linear-gradient(#999 50%, #fff 50%); flex: none; }
hr.first { margin: 3px 0 7px 2px; }
.main { flex: 1; min-width: 0; display: flex; flex-direction: column; background: #000; }
.toolbar { display: flex; align-items: center; height: 25px; flex: none; overflow: hidden; background: linear-gradient(#f6f5f3, #e8e7e2 55%, #d6d3ca); color: #000; }
.grip { width: 3px; height: 15px; margin: 0 7px 0 2px; background: repeating-linear-gradient(#aaa 0 2px, transparent 2px 4px); }
.sep { width: 2px; height: 15px; flex: none; background: linear-gradient(90deg, #999 50%, #fff 50%); margin: 0 2px 0 3px; }
.grip + .sep { margin: 0 4px 0 0; }
.pick { position: relative; display: flex; }
.pick select { appearance: none; border: 0; background: none; font: inherit; color: #000; padding: 0; width: 100%; }
.pick::after, .split::after { content: ""; border: 3px solid transparent; border-top-color: #000; border-bottom: 0; flex: none; align-self: center; }
.sym { width: 57px; margin-right: 8px; }
.per { width: 43px; }
.split { width: 29px; display: flex; gap: 4px; padding-left: 2px; box-sizing: border-box; }
.split svg { width: 16px; height: 16px; flex: none; }
.cursor { width: 27px; margin-right: 1px; }
.tool { width: 23px; height: 22px; flex: none; display: grid; place-items: center; }
.tool svg, .glyph svg { width: 16px; height: 16px; }
.faded { opacity: .45; }
.on { border: 1px solid #0a246a; background: #b6bdd2; box-shadow: inset 0 0 0 1px #0a246a55; box-sizing: border-box; }
.glyph { width: 23px; height: 22px; flex: none; display: grid; place-items: center; white-space: nowrap; }
.wide { width: 25px; }
.chart { display: block; flex: 1; min-height: 0; width: 100%; background: #000; }
.chart text { font-family: "Liberation Sans", Arial, sans-serif; font-size: 14px; white-space: pre; }
.chart text:not([fill]) { fill: #d3d3d3; }
.chart g[fill] text { fill: inherit; }
.chart .mid { text-anchor: middle; }
.chart .end { text-anchor: end; }
.chart .big { font-size: 19px; font-weight: bold; }
.chart .note { font-size: 15px; }
.chart .small { font-size: 11px; }
.chart .tiny { font-family: "DejaVu Sans Condensed", "DejaVu Sans", sans-serif; font-size: 9px; }
.chart .level { font-family: "DejaVu Sans Condensed", "DejaVu Sans", sans-serif; font-size: 9px; fill: #fff; }
.chart .level.dim { fill: #c8c8c8; }
.crisp { shape-rendering: crispEdges; }
</style>
